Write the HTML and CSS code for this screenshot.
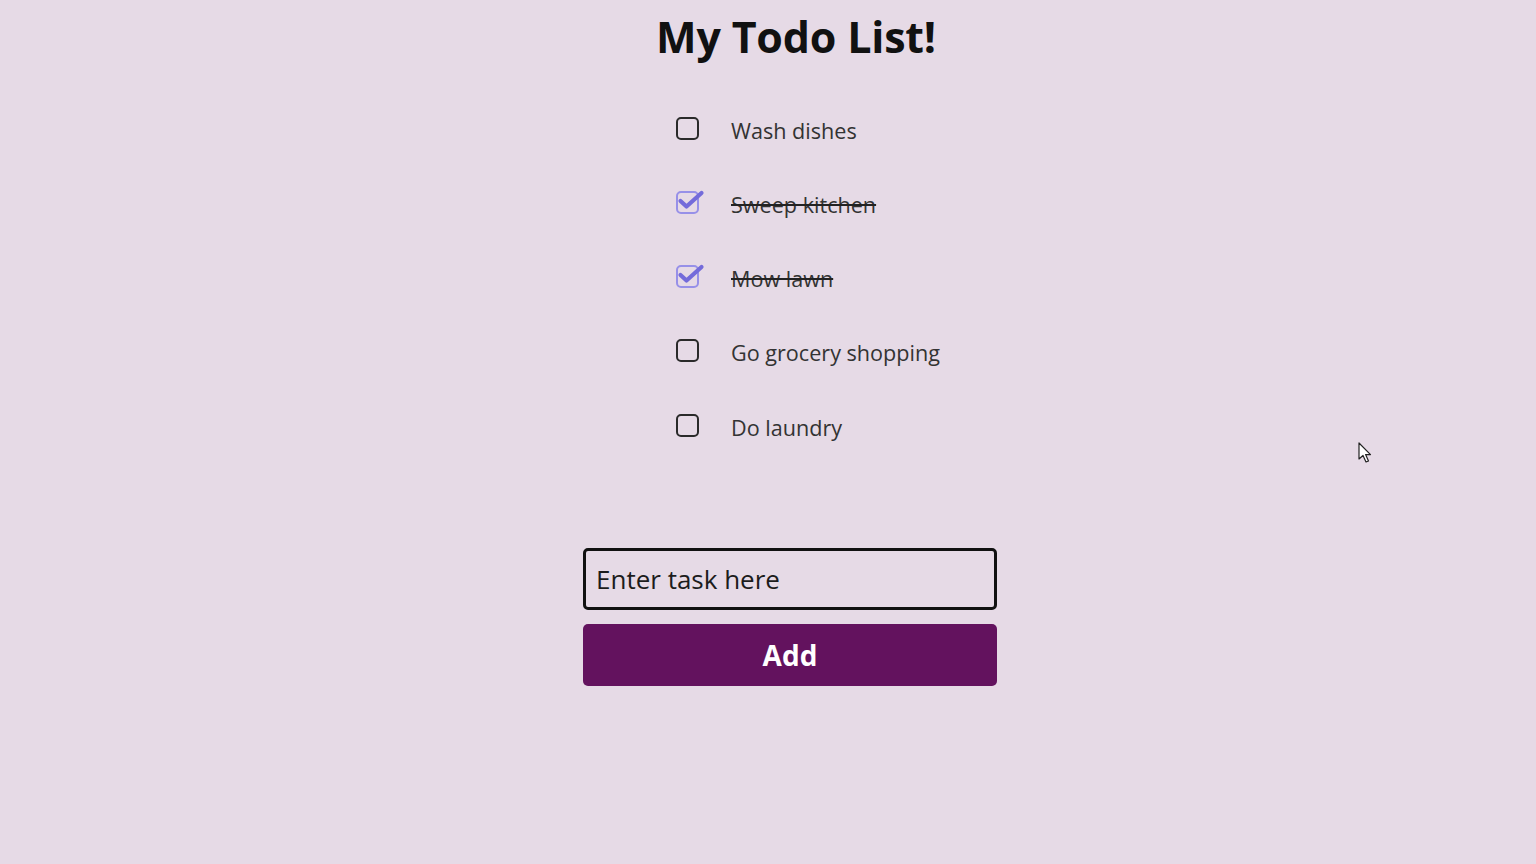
FILE: index.html
```html
<!DOCTYPE html>
<html lang="en">
<head>
<meta charset="utf-8">
<title>My Todo List!</title>
<link rel="stylesheet" href="styles.css">
</head>
<body>
<main class="app">
  <h1 class="title">My Todo List!</h1>
  <ul class="todo-list">
    <li class="todo">
      <span class="box"></span>
      <span class="label">Wash dishes</span>
    </li>
    <li class="todo done">
      <span class="box checked"><svg viewBox="0 0 36 26" width="36" height="26"><path d="M7.5 14 L13.5 19.5 L28.5 6" fill="none" stroke="#746bda" stroke-width="4.2" stroke-linecap="round" stroke-linejoin="round"/></svg></span>
      <span class="label">Sweep kitchen</span>
    </li>
    <li class="todo done">
      <span class="box checked"><svg viewBox="0 0 36 26" width="36" height="26"><path d="M7.5 14 L13.5 19.5 L28.5 6" fill="none" stroke="#746bda" stroke-width="4.2" stroke-linecap="round" stroke-linejoin="round"/></svg></span>
      <span class="label">Mow lawn</span>
    </li>
    <li class="todo">
      <span class="box"></span>
      <span class="label">Go grocery shopping</span>
    </li>
    <li class="todo">
      <span class="box"></span>
      <span class="label">Do laundry</span>
    </li>
  </ul>
  <form class="add-form">
    <input class="task-input" type="text" placeholder="Enter task here">
    <button class="add-btn" type="button">Add</button>
  </form>
</main>
<svg class="cursor" width="16" height="24" viewBox="0 0 16 24"><path d="M1 1 L1 17 L5 13.5 L8 20 L10.5 19 L7.6 12.6 L12.5 12.6 Z" fill="#fff" stroke="#222" stroke-width="1.2" stroke-linejoin="round"/></svg>
</body>
</html>
```
FILE: styles.css
```css
html, body {
  margin: 0;
  padding: 0;
}
body {
  background: #e6dae6;
  font-family: "Open Sans", "Noto Sans", sans-serif;
  color: #222;
  min-height: 864px;
  position: relative;
}
.app {
  width: 414px;
  margin-left: 583px;
  display: flex;
  flex-direction: column;
}
.title {
  margin: 0;
  padding: 9px 0 0 12px;
  text-align: center;
  font-size: 43px;
  font-weight: 700;
  color: #111;
  line-height: 56px;
  letter-spacing: -0.2px;
}
.todo-list {
  list-style: none;
  margin: 50px 0 0 0;
  padding: 0 0 0 93px;
  display: flex;
  flex-direction: column;
  gap: 44.25px;
}
.todo {
  display: flex;
  align-items: center;
  height: 30px;
  gap: 32px;
}
.box {
  width: 19px;
  height: 19px;
  border: 2px solid #2a2a2a;
  border-radius: 5px;
  flex: none;
  position: relative;
  margin-bottom: 4px;
}
.box.checked {
  border-color: #9790e8;
}
.box svg {
  position: absolute;
  left: -5px;
  top: -6px;
}
.label {
  font-size: 21.6px;
  color: #333;
}
.done .label {
  text-decoration: line-through;
  text-decoration-color: #222;
  text-decoration-thickness: 2px;
}
.add-form {
  margin: 106px 0 0 0;
  display: flex;
  flex-direction: column;
  gap: 14px;
}
.task-input {
  box-sizing: border-box;
  width: 414px;
  height: 62px;
  border: 3px solid #111;
  border-radius: 5px;
  background: transparent;
  font-family: "Open Sans", "Noto Sans", sans-serif;
  font-size: 26px;
  padding: 0 10px;
  color: #111;
  outline: none;
}
.task-input::placeholder {
  color: #1c1c1c;
  opacity: 1;
}
.add-btn {
  width: 414px;
  height: 62px;
  border: none;
  border-radius: 5px;
  background: #63125e;
  color: #fff;
  font-family: "Open Sans", "Noto Sans", sans-serif;
  font-size: 28px;
  font-weight: 700;
  cursor: pointer;
}
.cursor {
  position: absolute;
  left: 1358px;
  top: 442px;
}
```
